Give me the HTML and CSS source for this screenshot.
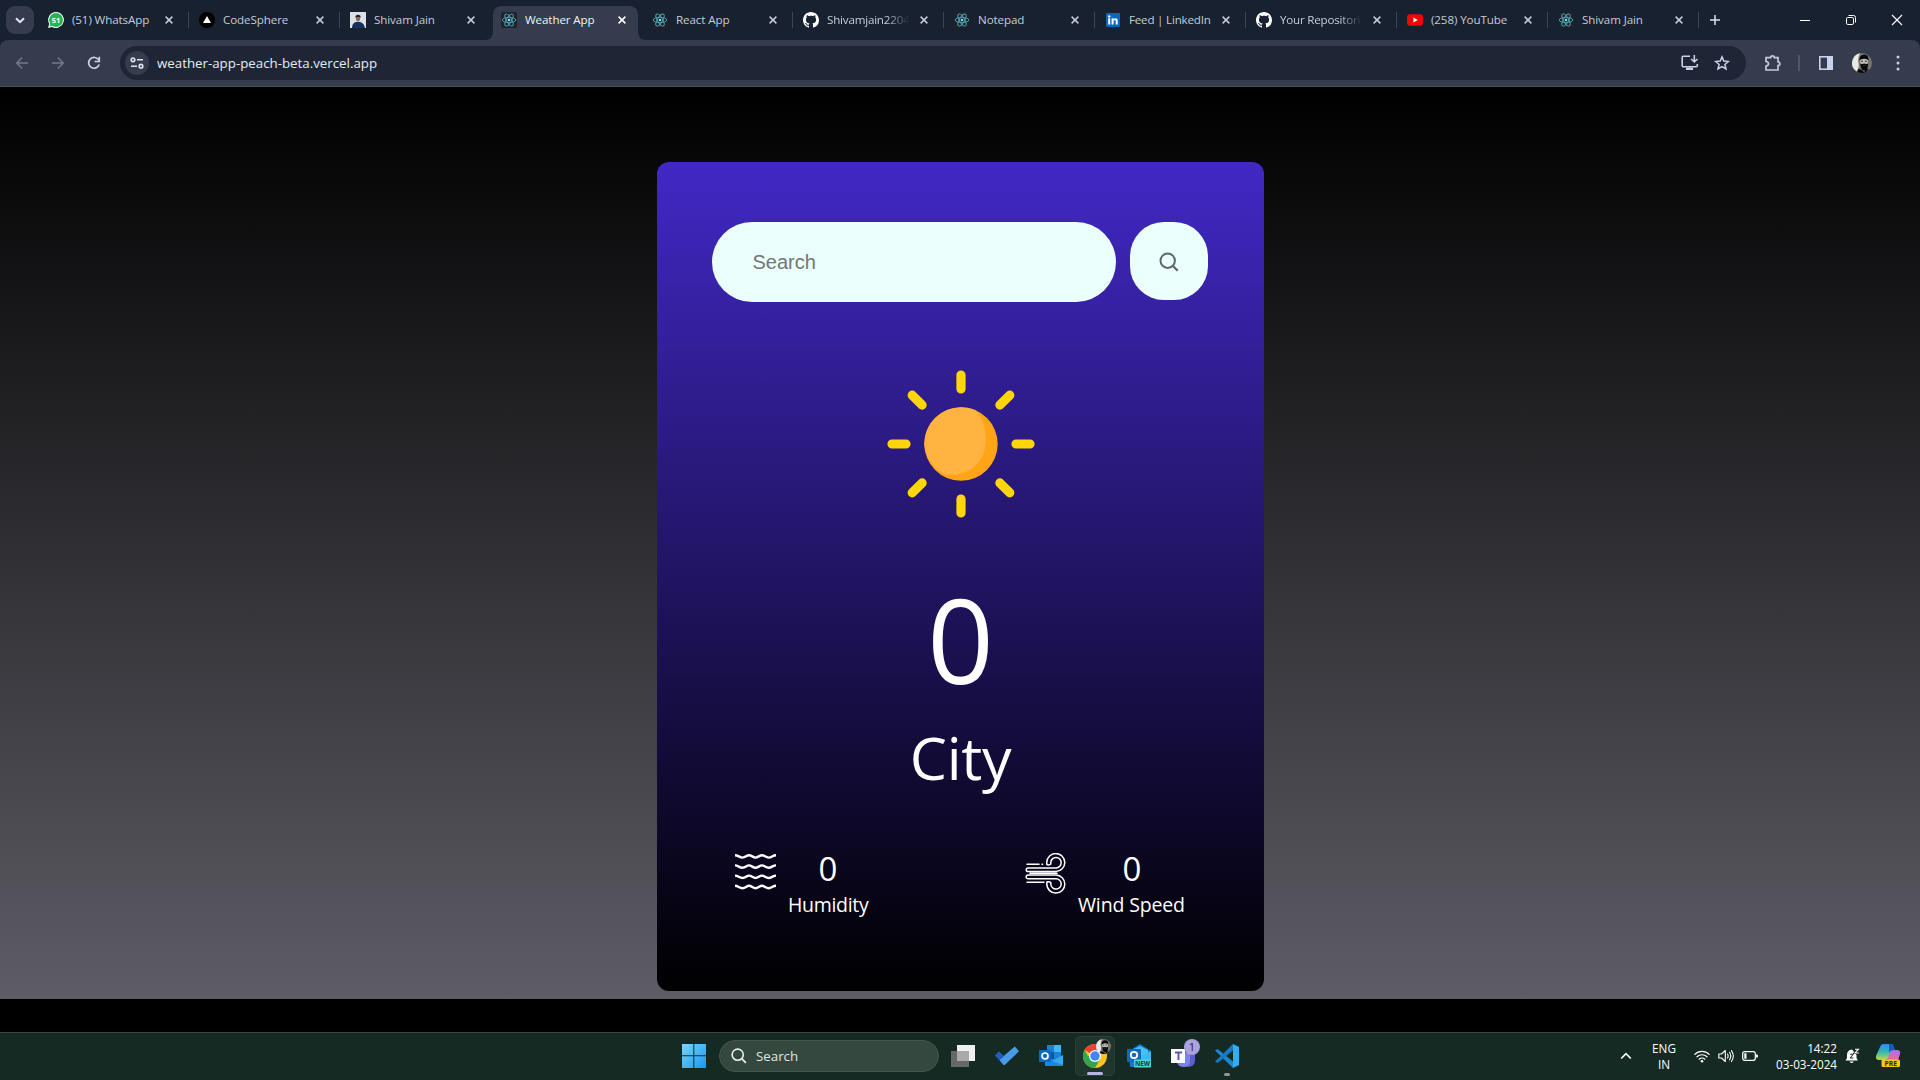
FILE: index.html
```html
<!DOCTYPE html>
<html lang="en">
<head>
<meta charset="utf-8">
<title>Weather App</title>
<link rel="stylesheet" href="styles.css">
</head>
<body>
<svg class="defs" aria-hidden="true">
  <symbol id="close" viewBox="0 0 8 8"><path d="M.6.6l6.8 6.8M7.4.6L.6 7.4" stroke="currentColor" stroke-width="1.500" fill="none"/></symbol>
  <symbol id="react" viewBox="0 0 16 16"><rect width="16" height="16" rx="2" fill="#1e2329"/><g fill="none" stroke="#4fa5b8" stroke-width=".9"><ellipse cx="8" cy="8" rx="6.8" ry="2.6"/><ellipse cx="8" cy="8" rx="6.8" ry="2.6" transform="rotate(60 8 8)"/><ellipse cx="8" cy="8" rx="6.8" ry="2.6" transform="rotate(120 8 8)"/></g><circle cx="8" cy="8" r="1.3" fill="#7fe0f2"/></symbol>
  <symbol id="github" viewBox="0 0 16 16"><path fill="#fff" d="M8 0C3.58 0 0 3.58 0 8c0 3.54 2.29 6.53 5.47 7.59.4.07.55-.17.55-.38 0-.19-.01-.82-.01-1.49-2.01.37-2.53-.49-2.69-.94-.09-.23-.48-.94-.82-1.13-.28-.15-.68-.52-.01-.53.63-.01 1.08.58 1.23.82.72 1.21 1.87.87 2.33.66.07-.52.28-.87.51-1.07-1.78-.2-3.64-.89-3.64-3.95 0-.87.31-1.59.82-2.15-.08-.2-.36-1.02.08-2.12 0 0 .67-.21 2.2.82.64-.18 1.32-.27 2-.27s1.36.09 2 .27c1.53-1.04 2.2-.82 2.2-.82.44 1.1.16 1.92.08 2.12.51.56.82 1.27.82 2.15 0 3.07-1.87 3.75-3.65 3.95.29.25.54.73.54 1.48 0 1.07-.01 1.93-.01 2.2 0 .21.15.46.55.38A8.01 8.01 0 0 0 16 8c0-4.42-3.58-8-8-8z"/></symbol>
  <symbol id="avatar" viewBox="0 0 20 20"><circle cx="10" cy="10" r="10" fill="#76756f"/><path d="M8 .2A10 10 0 0 0 5 18.600Q7.500 14 6.500 10Q5.500 5 8 .200z" fill="#e9e9e4"/><path d="M8 6.500q4-2.500 8 0l-.5 5q-1.500 4-3.500 4t-3.500-4z" fill="#c4c1b8"/><path d="M7.300 7.500q0-6 5-6 4.500 0 4.200 6-1.500-2-4.500-1.800T7.300 7.500zM8 10.500l2 .5q2.300-1 4.500 0l1.800-.5-1 5.500q-2.800 3-5.800 0zM6 16l3 .5 3 2.500 3-3 1.500.5Q14 20 10 20q-3 0-4.500-1.200z" fill="#090909"/><path d="M9 8.200h2M12.800 8.200h2M10.800 12.600h3" stroke="#2a2a2a" stroke-width="1"/></symbol>
</svg>

<header class="browser">
  <div class="tabstrip">
    <button class="tab-search"><svg width="10" height="7" viewBox="0 0 10 7"><path d="M1 1.200l4 4 4-4" fill="none" stroke="#e4e7ef" stroke-width="2"/></svg></button>
    <div class="tabs">
      <div class="tab"><svg class="fav" viewBox="0 0 16 16"><path d="M8 0a8 8 0 1 1-4 15L0 16l1.200-4A8 8 0 0 1 8 0z" fill="#f2fff6"/><circle cx="8" cy="8" r="6.900" fill="#24b557"/><path d="M1.500 14.500l1.200-3.500 2.500 2.500z" fill="#24b557"/><text x="8" y="10.800" class="fav-count">51</text></svg><span class="name">(51) WhatsApp</span><svg class="x"><use href="#close"/></svg></div>
      <div class="tab"><svg class="fav" viewBox="0 0 16 16"><circle cx="8" cy="8" r="8" fill="#000"/><path d="M8 4l4 7H4z" fill="#fff"/></svg><span class="name">CodeSphere</span><svg class="x"><use href="#close"/></svg></div>
      <div class="tab quiet"><svg class="fav" viewBox="0 0 16 16"><path d="M0 0h16v16H0z" fill="#dce1e7"/><path d="M2 16q0-5 4-6h4q4 1 5 6z" fill="#15305f"/><path d="M6 4h4v4L8 10 6 8z" fill="#8a6b60"/><path d="M5.500 6V4q2.500-2.500 5 0v2l-1-1h-3z" fill="#222"/></svg><span class="name">Shivam Jain</span><svg class="x"><use href="#close"/></svg></div>
      <div class="tab active quiet"><svg class="tab-shape" width="161" height="34" viewBox="0 0 161 34"><path d="M0 34q8 0 8-9V9q0-9 9-9h127q9 0 9 9v16q0 9 8 9z" fill="#343c4d"/></svg><svg class="fav"><use href="#react"/></svg><span class="name">Weather App</span><svg class="x"><use href="#close"/></svg></div>
      <div class="tab"><svg class="fav"><use href="#react"/></svg><span class="name">React App</span><svg class="x"><use href="#close"/></svg></div>
      <div class="tab"><svg class="fav"><use href="#github"/></svg><span class="name fade">Shivamjain2204</span><svg class="x"><use href="#close"/></svg></div>
      <div class="tab"><svg class="fav"><use href="#react"/></svg><span class="name">Notepad</span><svg class="x"><use href="#close"/></svg></div>
      <div class="tab"><svg class="fav" viewBox="0 0 16 16"><rect x="1" y="1" width="14" height="14" rx="1" fill="#0a66c2"/><path d="M3.200 6.300h2v6.200h-2zM6.600 6.300h1.900v.9q2.100-2 4.200.2v5.100h-2V9q-1-1.800-2.100 0v3.500h-2z" fill="#fff"/><circle cx="4.200" cy="4.400" r="1.200" fill="#fff"/></svg><span class="name tight">Feed | LinkedIn</span><svg class="x"><use href="#close"/></svg></div>
      <div class="tab"><svg class="fav"><use href="#github"/></svg><span class="name fade">Your Repositori</span><svg class="x"><use href="#close"/></svg></div>
      <div class="tab"><svg class="fav" viewBox="0 0 16 16"><rect y="2.200" width="16" height="11.600" rx="3" fill="#f00509"/><path d="M6.400 5.600l4.300 2.400-4.300 2.400z" fill="#fff"/></svg><span class="name">(258) YouTube</span><svg class="x"><use href="#close"/></svg></div>
      <div class="tab"><svg class="fav"><use href="#react"/></svg><span class="name">Shivam Jain</span><svg class="x"><use href="#close"/></svg></div>
    </div>
    <svg class="new-tab" width="10" height="10" viewBox="0 0 10 10"><path d="M5 0v10M0 5h10" stroke="#dbe1ee" stroke-width="1.500"/></svg>
    <div class="window-controls">
      <svg width="12" height="12" viewBox="0 0 12 12"><path d="M1 6.500h10" stroke="#fff"/></svg>
      <svg width="12" height="12" viewBox="0 0 12 12"><rect x="1.500" y="3.500" width="7" height="7" rx="1.300" fill="none" stroke="#fff"/><path d="M3.500 1.500h5q2 0 2 2v5" fill="none" stroke="#fff"/></svg>
      <svg width="12" height="12" viewBox="0 0 12 12"><path d="M1 1l10 10M11 1L1 11" stroke="#fff" stroke-width="1.100"/></svg>
    </div>
  </div>
  <div class="toolbar">
    <div class="nav">
      <svg width="14" height="14" viewBox="0 0 14 14"><path d="M13 7H2M7.200 1.500L1.700 7l5.500 5.500" fill="none" stroke="#72798a" stroke-width="1.500"/></svg>
      <svg width="14" height="14" viewBox="0 0 14 14"><path d="M1 7h11M6.800 1.500L12.300 7l-5.500 5.500" fill="none" stroke="#72798a" stroke-width="1.500"/></svg>
      <svg width="14" height="14" viewBox="0 0 14 14"><path d="M11.800 4.200A5.400 5.400 0 1 0 12.200 8.500" fill="none" stroke="#cdd3e1" stroke-width="1.700"/><path d="M12.300.8v4.700H7.600" fill="none" stroke="#cdd3e1" stroke-width="1.700"/></svg>
    </div>
    <div class="omnibox">
      <span class="site-info"><svg width="14" height="12" viewBox="0 0 14 12"><g fill="none" stroke="#dfe4f0" stroke-width="1.600"><circle cx="3" cy="2.800" r="1.800"/><path d="M7 2.800h6M1 9.200h6"/><circle cx="11" cy="9.200" r="1.800"/></g></svg></span>
      <span class="url">weather-app-peach-beta.vercel.app</span>
      <svg class="install" width="18" height="16" viewBox="0 0 18 16"><path d="M9 1.200H2.200Q1.200 1.200 1.200 2.200v8.600q0 1 1 1h13.100q1 0 1-1V9" fill="none" stroke="#cbd2e5" stroke-width="1.600"/><path d="M5 12.500h7V15H5z" fill="#cbd2e5"/><path d="M13.300 0v6.500M10.200 4l3.100 3 3.100-3" fill="none" stroke="#cbd2e5" stroke-width="1.600"/></svg>
      <svg width="16" height="16" viewBox="0 0 16 16"><path d="M8 1.900l1.800 4.200 4.600.4-3.500 3 1.100 4.500L8 11.600 4 14l1.100-4.500-3.500-3 4.600-.4z" fill="none" stroke="#cbd2e5" stroke-width="1.500"/></svg>
    </div>
    <div class="actions">
      <svg width="18" height="18" viewBox="0 0 18 18"><path d="M2 3.700h4.700a1.800 1.800 0 0 1 3.600 0H14v4.100a1.900 1.900 0 0 1 0 3.800V16H2v-3.900q2.500-.6 2.500-2.400T2 7.300z" fill="none" stroke="#c3cadb" stroke-width="1.700"/></svg>
      <i class="bar"></i>
      <svg class="panel" width="16" height="16" viewBox="0 0 16 16"><rect x="1.800" y="1.800" width="12.400" height="12.400" fill="none" stroke="#c9d3ee" stroke-width="1.600"/><path d="M9 1h6v14H9z" fill="#c9d3ee"/></svg>
      <svg class="profile" width="20" height="20"><use href="#avatar"/></svg>
      <svg width="4" height="16" viewBox="0 0 4 16"><g fill="#c9d0e0"><circle cx="2" cy="2" r="1.500"/><circle cx="2" cy="8" r="1.500"/><circle cx="2" cy="14" r="1.500"/></g></svg>
    </div>
  </div>
</header>

<main class="page">
  <section class="card">
    <form class="search">
      <input class="field" type="text" placeholder="Search">
      <button class="go" type="button"><svg width="20" height="20" viewBox="0 0 20 20"><circle cx="8.700" cy="8.700" r="7.200" fill="none" stroke="#5f686a" stroke-width="2"/><path d="M13.700 13.700l5 5" stroke="#5f686a" stroke-width="2.300"/></svg></button>
    </form>
    <svg class="sun" width="148" height="148" viewBox="0 0 148 148">
      <g stroke="#ffd60a" stroke-width="9.200" stroke-linecap="round">
        <path d="M74 5v14M74 129v14M5 74h14M129 74h14M25.200 25.200l9.900 9.900M112.900 112.900l9.900 9.900M122.800 25.200l-9.900 9.900M35.100 112.900l-9.900 9.900"/>
      </g>
      <circle cx="74" cy="74" r="36.700" fill="#ffa515"/>
      <path d="M89 40.500A36.700 36.700 0 0 0 37.300 74A36.700 36.700 0 0 0 58 104.500Q72 107 86 98Q99 88 98.800 68Q98.500 52 89 40.500z" fill="#ffb340"/>
    </svg>
    <div class="temp">0</div>
    <div class="city">City</div>
    <div class="stats">
      <div class="stat">
        <svg class="stat-icon" width="41" height="41" viewBox="0 0 41 41"><g fill="none" stroke="#fff" stroke-width="2.400"><path id="wave" d="M0 2.200C3 2.200 4.500 4.600 7.500 4.600S11.500 2.200 14 2.200s4 2.400 6.500 2.400 4-2.400 6.500-2.400 3.700 2.400 6.700 2.400 4-2.400 7.300-2.400"/><use href="#wave" y="10.200"/><use href="#wave" y="20.400"/><use href="#wave" y="30.600"/></g></svg>
        <div class="reading"><div class="value">0</div><div class="label humidity">Humidity</div></div>
      </div>
      <div class="stat">
        <svg class="stat-icon" width="41" height="41" viewBox="0 0 41 41"><g fill="none" stroke="#fff" stroke-width="1.500" stroke-linecap="round"><path d="M2 11.300h12M17 11.300h.6M22.500 11.800q2 .5 3.300-.8V9.500a5.200 5.200 0 1 1 5.200 5.400H3a1.800 1.800 0 0 0 0 3.600h28a9 9 0 1 0-9.200-9.300v2.200M2 29.300h17M22.500 28.800q2-.5 3.300.8v1.600a5.200 5.200 0 1 0 5.200-5.500H3a1.800 1.800 0 0 1 0-3.600h28a9 9 0 1 1-9.200 9.300v-2.300M5 20.300h27"/></g></svg>
        <div class="reading"><div class="value">0</div><div class="label wind">Wind Speed</div></div>
      </div>
    </div>
  </section>
</main>

<footer class="taskbar">
  <div class="dock">
    <svg class="start" width="24" height="24" viewBox="0 0 24 24"><defs><linearGradient id="win" x1="0" y1="0" x2="24" y2="24" gradientUnits="userSpaceOnUse"><stop stop-color="#7bd5fb"/><stop offset="1" stop-color="#1597ee"/></linearGradient></defs><path d="M0 0h11.300v11.300H0zM12.300 0H24v11.300H12.300zM0 12.300h11.300V24H0zM12.300 12.300H24V24H12.300z" fill="url(#win)"/></svg>
    <div class="task-search"><svg width="16" height="16" viewBox="0 0 16 16"><circle cx="6.700" cy="6.700" r="5.600" fill="none" stroke="#e8eeeb" stroke-width="1.600"/><path d="M10.700 10.700l4.200 4.200" stroke="#e8eeeb" stroke-width="1.800"/></svg><span>Search</span></div>
    <div class="app"><svg width="24" height="24" viewBox="0 0 24 24"><path d="M0 7h18v16H0z" fill="#666967"/><path d="M6 1h18v16H6z" fill="#f0f0f0"/><path d="M6 7h12v10H6z" fill="#aaa"/></svg></div>
    <div class="app"><svg width="24" height="24" viewBox="0 0 24 24"><path d="M0 11.500l4-4 8.200 8.200-4 4.200z" fill="#1f5db6"/><path d="M4.200 15.800L19.800 2.500l4.200 4.700L10.300 20.500q-1.200 1-2.300 0z" fill="#4a9ae9"/><path d="M0 11.500l4-4 5 4.800-4.800 4z" fill="#205cb9"/></svg></div>
    <div class="app"><svg width="24" height="24" viewBox="0 0 24 24"><path d="M8 1h14v15H8z" fill="#1683d8"/><path d="M15 1h7v7h-7z" fill="#42b7ef"/><path d="M8 8h7v7H8z" fill="#0d57a7"/><path d="M6 12l9 4 9-5v11H6z" fill="#1688df"/><path d="M13 17l11-6v10z" fill="#38a9ec"/><rect y="6" width="12" height="12" rx="1" fill="#1169bd"/><circle cx="6" cy="12" r="3" fill="none" stroke="#fff" stroke-width="1.700"/></svg></div>
    <div class="app current">
      <svg width="24" height="24" viewBox="0 0 24 24"><circle cx="12" cy="12" r="12" fill="#fbc423"/><path d="M12 12L1.600 6A12 12 0 0 1 22.400 6z" fill="#e94335"/><path d="M1.600 6A12 12 0 0 0 12 24l5.200-9L12 12H5z" fill="#31a552"/><circle cx="12" cy="12" r="6" fill="#fff"/><circle cx="12" cy="12" r="4.700" fill="#4285f4"/></svg>
      <svg class="app-avatar" width="15" height="15"><use href="#avatar"/></svg>
      <i class="running"></i>
    </div>
    <div class="app"><svg width="24" height="24" viewBox="0 0 24 24"><path d="M2 7L13 0l11 7v16H3z" fill="#1376cf"/><path d="M5 6l8-4 8 4v7H5z" fill="#48c0f0"/><path d="M10 14L24 7v12z" fill="#38bcf2"/><rect y="5" width="14" height="13" rx="1" fill="#1269bf"/><circle cx="7" cy="11" r="3.200" fill="none" stroke="#fff" stroke-width="1.800"/><rect x="7" y="15.500" width="17" height="8" rx="1" fill="#4bd8d6"/><text x="15.500" y="22" class="new">NEW</text></svg></div>
    <div class="app"><svg width="24" height="24" viewBox="0 0 24 24"><path d="M14 8h10v9a6 6 0 0 1-8 5.500z" fill="#5a5fc9"/><path d="M6 9h13v8q0 6-6 6t-7-5z" fill="#7b83eb"/><rect y="5" width="14" height="14" fill="#fff"/><path d="M4 8.500h7M7.500 8.500v7.500" stroke="#5558af" stroke-width="1.900"/></svg><b class="count">1</b></div>
    <div class="app"><svg width="24" height="24" viewBox="0 0 24 24"><path d="M0 6.500L2.500 5 18 17.500V24z" fill="#1b88d4"/><path d="M0 17.500L2.500 19 18 6.500V0z" fill="#1679c4"/><path d="M18 0l6 3v18l-6 3z" fill="#33adf2"/></svg><i class="running idle"></i></div>
  </div>
  <div class="tray">
    <svg class="more" width="12" height="8" viewBox="0 0 12 8"><path d="M1.200 6.500L6 1.700l4.800 4.800" fill="none" stroke="#fff" stroke-width="1.600"/></svg>
    <div class="lang"><span>ENG</span><span>IN</span></div>
    <div class="status">
      <svg width="16" height="16" viewBox="0 0 16 16"><g fill="none" stroke="#fff" stroke-width="1.200" stroke-linecap="round"><path d="M.8 6.300a10.200 10.200 0 0 1 14.400 0M3 8.800a7.100 7.100 0 0 1 10 0M5.200 11.200a4 4 0 0 1 5.600 0"/></g><circle cx="8" cy="13.300" r="1.300" fill="#fff"/></svg>
      <svg width="16" height="16" viewBox="0 0 16 16"><g fill="none" stroke="#fff" stroke-width="1.100" stroke-linecap="round" stroke-linejoin="round"><path d="M.8 6h2.700L7.300 2.500v11L3.500 10H.8zM9.500 6q1.300 2 0 4M11.500 4.300q2.500 3.700 0 7.400M13.400 2.600q3.800 5.400 0 10.800"/></g></svg>
      <svg width="16" height="16" viewBox="0 0 16 16"><rect x=".7" y="3.700" width="12.600" height="8.600" rx="2" fill="none" stroke="#fff" stroke-width="1.200"/><path d="M2.300 5.300h2.200v5.400H2.300zM14 6.500h1.200q.8 0 .8 1.500t-.8 1.500H14z" fill="#fff"/></svg>
    </div>
    <div class="clock"><span>14:22</span><span>03-03-2024</span></div>
    <svg class="bell" width="15" height="16" viewBox="0 0 15 16"><path d="M7 1.500Q2 2 2 7v3L.5 12.500h12.300L11.500 10V7zM4.500 13.500h4.300q-2 3-4.300 0z" fill="#fff"/><path d="M5.200 6.300h3l-3 3.700h3.200" fill="none" stroke="#14291f" stroke-width="1"/><path d="M9.500.8h4L9.800 5H14" fill="none" stroke="#14291f" stroke-width="2.200"/><path d="M10 1.200h3.500L10 5h3.800" fill="none" stroke="#fff" stroke-width="1.100"/></svg>
    <svg class="copilot" width="26" height="24" viewBox="0 0 26 24"><defs><linearGradient id="c1" x1="0" y1="0" x2="0" y2="1"><stop stop-color="#2390ef"/><stop offset=".5" stop-color="#34b8ad"/><stop offset="1" stop-color="#c4d941"/></linearGradient><linearGradient id="c2" x1="0" y1="0" x2="0" y2="1"><stop stop-color="#b06cf4"/><stop offset=".6" stop-color="#eb67a0"/><stop offset="1" stop-color="#f49a52"/></linearGradient></defs><path d="M7 0h8q3 0 2 3l-4 10q-1 3-4 3H3q-4 0-3-4L4 3q1-3 3-3z" fill="url(#c1)"/><path d="M17 6h4q4 0 3 4l-3 9q-1 3-4 3h-5q-3 0-2-3l4-10q1-3 3-3z" fill="url(#c2)"/><path d="M13 0h2q3 0 4 6h-3q-2 0-3 3z" fill="#1559bf"/><rect x="5.500" y="15.500" width="18.500" height="7.500" rx="1.500" fill="#f7c51d"/><text x="14.700" y="22" class="pre">PRE</text></svg>
  </div>
</footer>
</body>
</html>
```
FILE: styles.css
```css
* { box-sizing: border-box; }
body {
  margin: 0;
  width: 1920px;
  height: 1080px;
  overflow: hidden;
  background: #000;
  color: #fff;
  font-family: "Open Sans", "Noto Sans", sans-serif;
  display: flex;
  flex-direction: column;
}
svg { display: block; flex: none; }
button { border: 0; padding: 0; display: flex; align-items: center; justify-content: center; }
.defs { position: absolute; width: 0; height: 0; }

/* browser chrome */
.browser { height: 87px; flex: none; background: #182130; }
.tabstrip { height: 40px; display: flex; align-items: center; }
.tab-search { width: 28px; height: 28px; margin-left: 6px; border-radius: 9px; background: #343c4d; }
.tabs { display: flex; margin-left: 4px; align-self: stretch; }
.tab {
  position: relative;
  width: 151px;
  height: 40px;
  padding-left: 10px;
  display: flex;
  align-items: center;
  color: #c5cbd9;
}
.tab::after { content: ""; position: absolute; right: 0; top: 12px; width: 1.5px; height: 16px; background: #3c4557; }
.tab.quiet::after { content: none; }
.fav { width: 16px; height: 16px; }
.fav-count { font: bold 7.500px "Open Sans", sans-serif; fill: #fff; text-anchor: middle; }
.name { margin-left: 8px; width: 83px; font-size: 11.600px; letter-spacing: -.1px; white-space: nowrap; overflow: hidden; line-height: 18px; padding-top: 2px; height: 22px; }
.tight { letter-spacing: -.2px; }
.fade { letter-spacing: -.2px; -webkit-mask-image: linear-gradient(90deg, #000 72%, transparent 99%); mask-image: linear-gradient(90deg, #000 72%, transparent 99%); }
.x { width: 8px; height: 8px; margin-left: 10px; color: #c5cad5; }
.active { color: #f0f2f7; z-index: 1; }
.active .x { color: #fff; }
.active > * { position: relative; }
.active .tab-shape { position: absolute; left: -6px; top: 6px; }
.new-tab { margin-left: 11px; }
.window-controls { margin-left: auto; margin-right: 17px; display: flex; gap: 34px; }

.toolbar { height: 47px; background: #343c4d; border-bottom: 1px solid #464a52; border-radius: 8px 8px 0 0; display: flex; align-items: center; }
.nav { display: flex; gap: 22px; margin-left: 15px; }
.omnibox { width: 1626px; height: 34px; margin-left: 19px; border-radius: 17px; background: #1e2636; display: flex; align-items: center; padding: 0 16px 0 5px; }
.site-info { width: 24px; height: 24px; border-radius: 50%; background: #343c4d; display: flex; align-items: center; justify-content: center; }
.url { margin-left: 8px; font-size: 13.300px; color: #e8ebf3; }
.install { margin-left: auto; margin-right: 15px; }
.actions { flex: 1; display: flex; align-items: center; padding-left: 18px; }
.bar { width: 1.5px; height: 16px; margin-left: 16px; background: #4f586b; }
.panel { margin-left: 18px; }
.profile { margin-left: 18px; }
.profile + svg { margin-left: 24px; }

/* weather page */
.page { height: 912px; flex: none; background: linear-gradient(#000, #5e5d66); padding-top: 75px; display: flex; justify-content: center; align-items: flex-start; }
.card {
  width: 607px;
  height: 829px;
  margin-left: 1px;
  border-radius: 12px;
  background: linear-gradient(#4128c5, #000);
  padding-top: 60px;
  display: flex;
  flex-direction: column;
  align-items: center;
}
.search { display: flex; gap: 14px; align-items: flex-start; margin-right: 2px; }
.field { width: 404px; height: 80px; border: 0; border-radius: 40px; background: #ebfffc; padding: 0 40px 0 41px; font: 20px "Liberation Sans", Arial, sans-serif; color: #626262; }
.field::placeholder { color: #757575; opacity: 1; }
.go { width: 78px; height: 78px; border-radius: 34px; background: #ebfffc; padding-top: 1px; }
.sun { margin-top: 67.500px; }
.temp { margin-top: 61.500px; height: 120px; font-size: 116.500px; line-height: 120px; }
.city { margin-top: 18px; height: 80px; font-size: 59px; letter-spacing: -.3px; line-height: 80px; }
.stats { align-self: stretch; margin-top: 51px; padding: 0 78px 0 78px; display: flex; justify-content: space-between; }
.stat { display: flex; gap: 12px; align-items: flex-start; padding-top: 5px; }
.reading { display: flex; flex-direction: column; align-items: center; }
.value { font-size: 33px; height: 30px; line-height: 32px; }
.label { font-size: 19.500px; line-height: 28px; margin-top: 8px; height: 28px; white-space: nowrap; }
.humidity { width: 80px; letter-spacing: -.3px; }
.wind { width: 108px; letter-spacing: -.15px; }

/* taskbar */
.taskbar { height: 48px; margin-top: auto; padding-bottom: 1px; background: #152a22; border-top: 1px solid #3a4743; display: flex; align-items: center; }
.dock { display: flex; align-items: center; margin-left: 682px; }
.task-search { width: 220px; height: 32px; margin: 0 2px 0 13px; padding-left: 11px; border-radius: 16px; background: #35483f; border: 1px solid #43554c; display: flex; align-items: center; gap: 9px; font-size: 13.300px; color: #dfe6e2; }
.app { position: relative; width: 40px; height: 40px; margin: 0 2px; display: flex; align-items: center; justify-content: center; }
.current { background: #20352c; border: 1px solid #2b3f36; border-radius: 5px; }
.app-avatar { position: absolute; right: 3px; top: 2px; }
.running { position: absolute; left: 12px; bottom: 0; width: 16px; height: 3px; border-radius: 2px; background: #b8b4e3; }
.current .running { left: 11px; }
.idle { left: 17px; width: 6px; background: #8d9994; }
.count { position: absolute; right: 3px; top: 3px; width: 16px; height: 16px; border-radius: 50%; background: #aaa2dd; color: #222033; font-size: 11px; line-height: 16px; text-align: center; font-weight: 400; }
.new { font: bold 6.500px "Open Sans", sans-serif; fill: #103b48; text-anchor: middle; }
.pre { font: bold 6.800px "Open Sans", sans-serif; fill: #322704; text-anchor: middle; }
.tray { margin-left: auto; margin-right: 18px; display: flex; align-items: center; font-size: 11.700px; line-height: 16px; }
.lang { width: 40px; margin-left: 12px; display: flex; flex-direction: column; align-items: center; }
.status { display: flex; gap: 8px; margin-left: 10px; }
.clock { width: 79px; display: flex; flex-direction: column; align-items: flex-end; }
.bell { margin-left: 8px; }
.copilot { margin-left: 16px; }
```
